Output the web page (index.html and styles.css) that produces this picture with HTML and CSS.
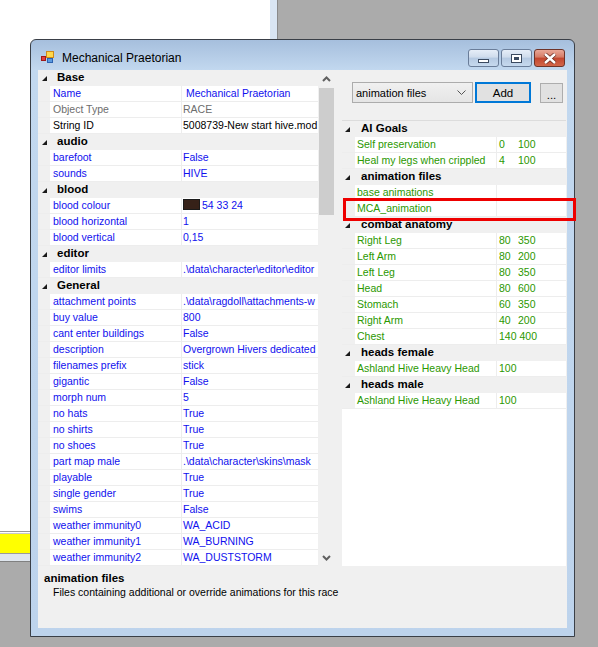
FILE: index.html
```html
<!DOCTYPE html>
<html lang="en">
<head>
    <meta charset="UTF-8">
    <title>Mechanical Praetorian</title>
    <link rel="stylesheet" href="styles.css">
</head>
<body>
<div class="desktop">

    <!-- window behind -->
    <div class="back-window">
        <div class="back-main">
            <div class="back-body"></div>
            <div class="back-strip"></div>
        </div>
        <div class="back-status">
            <div class="status-line"></div>
            <div class="status-yellow"></div>
            <div class="status-foot"></div>
        </div>
    </div>

    <!-- editor window -->
    <div class="window">
        <div class="titlebar">
            <svg class="app-icon" width="13" height="13" viewBox="0 0 13 13">
                <rect x="5.5" y="0.5" width="7" height="6" fill="#ffd84a" stroke="#d08a1a"/>
                <rect x="6.5" y="7.5" width="5" height="4" fill="#5b9be0" stroke="#2c62b0"/>
                <rect x="0.5" y="5.5" width="4" height="4" fill="#e04040" stroke="#a01818"/>
            </svg>
            <span class="title">Mechanical Praetorian</span>
            <div class="caption-buttons">
                <div class="cap">
                    <svg width="13" height="6" viewBox="0 0 13 6"><rect x="1.5" y="1.5" width="10" height="3" fill="#fff" stroke="#3b4a60"/></svg>
                </div>
                <div class="cap">
                    <svg width="11" height="9" viewBox="0 0 11 9"><rect x="0.5" y="0.5" width="10" height="8" fill="#fff" stroke="#3b4a60"/><rect x="3" y="3" width="5" height="3" fill="#3b4a60"/></svg>
                </div>
                <div class="cap cap-close">
                    <svg width="14" height="11" viewBox="0 0 14 11"><path d="M2 1 L12 10 M12 1 L2 10" stroke="#6b2a20" stroke-width="4"/><path d="M2 1 L12 10 M12 1 L2 10" stroke="#fff" stroke-width="2.4"/></svg>
                </div>
            </div>
        </div>

        <div class="client">
            <div class="panes">
                <div class="left-pane">
                    <div class="grid props">
                        <div class="cat"><div class="margin"><span class="tri"></span></div><div class="cat-label">Base</div></div>
                        <div class="row"><div class="margin"></div><div class="name">Name</div><div class="value">&nbsp;Mechanical Praetorian</div></div>
                        <div class="row readonly"><div class="margin"></div><div class="name">Object Type</div><div class="value">RACE</div></div>
                        <div class="row plain"><div class="margin"></div><div class="name">String ID</div><div class="value">5008739-New start hive.mod</div></div>

                        <div class="cat"><div class="margin"><span class="tri"></span></div><div class="cat-label">audio</div></div>
                        <div class="row"><div class="margin"></div><div class="name">barefoot</div><div class="value">False</div></div>
                        <div class="row"><div class="margin"></div><div class="name">sounds</div><div class="value">HIVE</div></div>

                        <div class="cat"><div class="margin"><span class="tri"></span></div><div class="cat-label">blood</div></div>
                        <div class="row"><div class="margin"></div><div class="name">blood colour</div><div class="value"><span class="swatch"></span>54 33 24</div></div>
                        <div class="row"><div class="margin"></div><div class="name">blood horizontal</div><div class="value">1</div></div>
                        <div class="row"><div class="margin"></div><div class="name">blood vertical</div><div class="value">0,15</div></div>

                        <div class="cat"><div class="margin"><span class="tri"></span></div><div class="cat-label">editor</div></div>
                        <div class="row"><div class="margin"></div><div class="name">editor limits</div><div class="value">.\data\character\editor\editor</div></div>

                        <div class="cat"><div class="margin"><span class="tri"></span></div><div class="cat-label">General</div></div>
                        <div class="row"><div class="margin"></div><div class="name">attachment points</div><div class="value">.\data\ragdoll\attachments-w</div></div>
                        <div class="row"><div class="margin"></div><div class="name">buy value</div><div class="value">800</div></div>
                        <div class="row"><div class="margin"></div><div class="name">cant enter buildings</div><div class="value">False</div></div>
                        <div class="row"><div class="margin"></div><div class="name">description</div><div class="value">Overgrown Hivers dedicated</div></div>
                        <div class="row"><div class="margin"></div><div class="name">filenames prefix</div><div class="value">stick</div></div>
                        <div class="row"><div class="margin"></div><div class="name">gigantic</div><div class="value">False</div></div>
                        <div class="row"><div class="margin"></div><div class="name">morph num</div><div class="value">5</div></div>
                        <div class="row"><div class="margin"></div><div class="name">no hats</div><div class="value">True</div></div>
                        <div class="row"><div class="margin"></div><div class="name">no shirts</div><div class="value">True</div></div>
                        <div class="row"><div class="margin"></div><div class="name">no shoes</div><div class="value">True</div></div>
                        <div class="row"><div class="margin"></div><div class="name">part map male</div><div class="value">.\data\character\skins\mask</div></div>
                        <div class="row"><div class="margin"></div><div class="name">playable</div><div class="value">True</div></div>
                        <div class="row"><div class="margin"></div><div class="name">single gender</div><div class="value">True</div></div>
                        <div class="row"><div class="margin"></div><div class="name">swims</div><div class="value">False</div></div>
                        <div class="row"><div class="margin"></div><div class="name">weather immunity0</div><div class="value">WA_ACID</div></div>
                        <div class="row"><div class="margin"></div><div class="name">weather immunity1</div><div class="value">WA_BURNING</div></div>
                        <div class="row"><div class="margin"></div><div class="name">weather immunity2</div><div class="value">WA_DUSTSTORM</div></div>
                    </div>
                    <div class="scrollbar">
                        <div class="sb-btn">
                            <svg width="9" height="6" viewBox="0 0 9 6"><polyline points="1,5 4.5,1.5 8,5" fill="none" stroke="#606060" stroke-width="2"/></svg>
                        </div>
                        <div class="sb-track"><div class="sb-thumb"></div></div>
                        <div class="sb-btn">
                            <svg width="9" height="6" viewBox="0 0 9 6"><polyline points="1,1 4.5,4.5 8,1" fill="none" stroke="#606060" stroke-width="2"/></svg>
                        </div>
                    </div>
                </div>

                <div class="right-pane">
                    <div class="toolbar">
                        <div class="combo">
                            <span>animation files</span>
                            <svg width="9" height="5" viewBox="0 0 9 5"><polyline points="0.5,0.5 4.5,4.5 8.5,0.5" fill="none" stroke="#555" stroke-width="1"/></svg>
                        </div>
                        <div class="btn btn-default">Add</div>
                        <div class="btn btn-dots">...</div>
                    </div>
                    <div class="grid lists">
                        <div class="cat"><div class="margin"><span class="tri"></span></div><div class="cat-label">AI Goals</div></div>
                        <div class="row"><div class="margin"></div><div class="name">Self preservation</div><div class="value"><span class="num">0</span>100</div></div>
                        <div class="row"><div class="margin"></div><div class="name">Heal my legs when crippled</div><div class="value"><span class="num">4</span>100</div></div>

                        <div class="cat"><div class="margin"><span class="tri"></span></div><div class="cat-label">animation files</div></div>
                        <div class="row"><div class="margin"></div><div class="name">base animations</div><div class="value"></div></div>
                        <div class="row"><div class="margin"></div><div class="name">MCA_animation</div><div class="value"></div></div>

                        <div class="cat"><div class="margin"><span class="tri"></span></div><div class="cat-label">combat anatomy</div></div>
                        <div class="row"><div class="margin"></div><div class="name">Right Leg</div><div class="value"><span class="num">80</span>350</div></div>
                        <div class="row"><div class="margin"></div><div class="name">Left Arm</div><div class="value"><span class="num">80</span>200</div></div>
                        <div class="row"><div class="margin"></div><div class="name">Left Leg</div><div class="value"><span class="num">80</span>350</div></div>
                        <div class="row"><div class="margin"></div><div class="name">Head</div><div class="value"><span class="num">80</span>600</div></div>
                        <div class="row"><div class="margin"></div><div class="name">Stomach</div><div class="value"><span class="num">60</span>350</div></div>
                        <div class="row"><div class="margin"></div><div class="name">Right Arm</div><div class="value"><span class="num">40</span>200</div></div>
                        <div class="row"><div class="margin"></div><div class="name">Chest</div><div class="value"><span class="num">140</span>400</div></div>

                        <div class="cat"><div class="margin"><span class="tri"></span></div><div class="cat-label">heads female</div></div>
                        <div class="row"><div class="margin"></div><div class="name">Ashland Hive Heavy Head</div><div class="value">100</div></div>

                        <div class="cat"><div class="margin"><span class="tri"></span></div><div class="cat-label">heads male</div></div>
                        <div class="row"><div class="margin"></div><div class="name">Ashland Hive Heavy Head</div><div class="value">100</div></div>
                    </div>
                </div>
            </div>

            <div class="help">
                <div class="help-title">animation files</div>
                <div class="help-text">Files containing additional or override animations for this race</div>
            </div>
        </div>

        <!-- highlight drawn over the selected row -->
        <div class="highlight"></div>
    </div>

</div>
</body>
</html>
```

FILE: styles.css
```css
body {
    margin: 0;
    background-color: #ababab;
    font-family: "Liberation Sans", Arial, sans-serif;
    font-size: 10.5px;
    color: #000;
}
.desktop {
    position: relative;
    width: 598px;
    height: 647px;
    overflow: hidden;
}

/* window behind */
.back-window {
    position: absolute;
    left: 0;
    top: 0;
    width: 278px;
    height: 562px;
    display: flex;
    flex-direction: column;
}
.back-main {
    flex: 1;
    display: flex;
}
.back-body {
    flex: 1;
    background-color: #fff;
}
.back-strip {
    width: 7px;
    background-color: #d9e5f3;
    border-right: 1px solid #8a8a8a;
}
.back-status {
    height: 31px;
    display: flex;
    flex-direction: column;
}
.status-line {
    height: 3px;
    background-color: #fff;
    border-top: 1px solid #9a9a9a;
    border-bottom: 1px solid #c8c8c8;
    box-sizing: border-box;
}
.status-yellow {
    height: 19px;
    background-color: #ffff00;
    border-bottom: 1px solid #9a9a9a;
}
.status-foot {
    flex: 1;
    background-color: #dfe6ee;
    border-bottom: 1px solid #808080;
}

/* main window */
.window {
    position: absolute;
    left: 30px;
    top: 39px;
    width: 545px;
    height: 598px;
    box-sizing: border-box;
    border: 1px solid #3a3f47;
    border-radius: 6px 6px 0 0;
    background: linear-gradient(to bottom, #a6bfdd 0, #c2d8ef 30px, #bdd3ec 100%);
    padding: 0 7px 8px 7px;
    display: flex;
    flex-direction: column;
}
.titlebar {
    height: 30px;
    display: flex;
    align-items: flex-start;
    padding-left: 3px;
}
.app-icon {
    margin-top: 11px;
}
.title {
    margin-left: 8px;
    margin-top: 11px;
    font-size: 12px;
    line-height: 14px;
}
.caption-buttons {
    margin-left: auto;
    margin-top: 9px;
    margin-right: 2px;
    display: flex;
    gap: 2px;
}
.cap {
    width: 31px;
    height: 18px;
    box-sizing: border-box;
    border: 1px solid #6a7d99;
    border-radius: 3px;
    background: linear-gradient(to bottom, #e6eef8 0%, #cfdcec 45%, #b5c9e2 50%, #c6d9ee 100%);
    display: flex;
    align-items: center;
    justify-content: center;
}
.cap:first-child svg {
    margin-top: 5px;
}
.cap-close {
    background: linear-gradient(to bottom, #e9a797 0%, #d57a65 45%, #c2452e 50%, #d2664a 100%);
    border-color: #6e3328;
}

.client {
    flex: 1;
    background-color: #f0f0f0;
    display: flex;
    flex-direction: column;
}
.panes {
    height: 496px;
    display: flex;
    gap: 7px;
}
.left-pane {
    width: 297px;
    display: flex;
}

/* property grid */
.grid {
    display: flex;
    flex-direction: column;
}
.props {
    width: 280px;
}
.row,
.cat {
    height: 16px;
    box-sizing: border-box;
    display: flex;
    line-height: 15px;
    white-space: nowrap;
}
.row {
    border-bottom: 1px solid #ededed;
}
.cat {
    background-color: #f0f0f0;
}
.margin {
    width: 12px;
    flex: none;
    background-color: #f0f0f0;
    position: relative;
}
.tri {
    position: absolute;
    left: 4px;
    top: 6px;
    width: 0;
    height: 0;
    border-left: 5px solid transparent;
    border-bottom: 5px solid #1a1a1a;
}
.cat-label {
    font-weight: bold;
    padding-left: 7px;
    font-size: 11.5px;
}
.name {
    width: 132px;
    flex: none;
    box-sizing: border-box;
    background-color: #fff;
    border-right: 1px solid #ededed;
    padding-left: 3px;
    overflow: hidden;
    color: #1010ee;
}
.value {
    flex: 1;
    background-color: #fff;
    padding-left: 1px;
    overflow: hidden;
    color: #1010ee;
}
.readonly .name,
.readonly .value {
    color: #6d6d6d;
}
.plain .name,
.plain .value {
    color: #000;
}
.swatch {
    display: inline-block;
    width: 15px;
    height: 9px;
    background-color: #362118;
    border: 1px solid #1a1a1a;
    vertical-align: -1px;
    margin-right: 2px;
}

.scrollbar {
    width: 17px;
    background-color: #f0f0f0;
    display: flex;
    flex-direction: column;
}
.sb-btn {
    height: 17px;
    display: flex;
    align-items: center;
    justify-content: center;
}
.sb-track {
    flex: 1;
    padding: 1px 1px;
}
.sb-thumb {
    height: 127px;
    background-color: #cdcdcd;
}

/* right pane */
.right-pane {
    width: 224px;
    display: flex;
    flex-direction: column;
    padding-top: 12px;
}
.toolbar {
    height: 21px;
    display: flex;
    padding-left: 10px;
}
.combo {
    width: 121px;
    box-sizing: border-box;
    border: 1px solid #acacac;
    background: linear-gradient(to bottom, #f0f0f0, #e5e5e5);
    display: flex;
    align-items: center;
    justify-content: space-between;
    padding: 0 6px 0 3px;
    font-size: 11px;
}
.btn {
    box-sizing: border-box;
    background-color: #e1e1e1;
    border: 1px solid #adadad;
    display: flex;
    align-items: center;
    justify-content: center;
    font-size: 11.5px;
}
.btn-default {
    width: 56px;
    margin-left: 2px;
    border: 2px solid #0078d7;
}
.btn-dots {
    width: 23px;
    margin-left: 9px;
    margin-top: 1px;
    padding-top: 3px;
}
.lists {
    margin-top: 17px;
    flex: 1;
    background-color: #fff;
    border-top: 1px solid #dcdcdc;
}
.lists .margin {
    width: 13px;
}
.lists .cat-label {
    padding-left: 6px;
}
.lists .tri {
    left: 3px;
}
.lists .name {
    width: 142px;
    padding-left: 2px;
    color: #2a9800;
}
.lists .value {
    padding-left: 2px;
    color: #2a9800;
}
.num {
    display: inline-block;
    min-width: 16px;
    margin-right: 3px;
}

/* help area */
.help {
    flex: 1;
    padding: 5px 0 0 6px;
    line-height: 14px;
    white-space: nowrap;
}
.help-title {
    font-weight: bold;
    font-size: 11.5px;
}
.help-text {
    padding-left: 9px;
}

.highlight {
    position: absolute;
    left: 312px;
    top: 158px;
    width: 233px;
    height: 23px;
    box-sizing: border-box;
    border: 3px solid #ee0000;
}
```
